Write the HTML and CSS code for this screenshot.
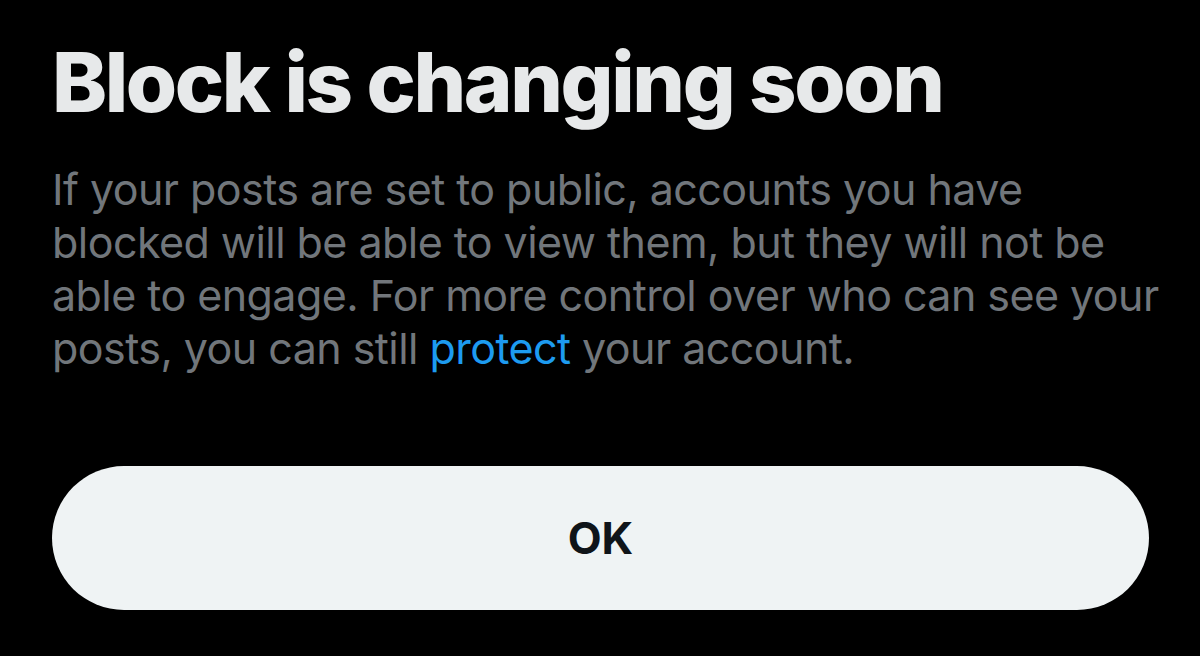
FILE: index.html
```html
<!DOCTYPE html>
<html lang="en">
<head>
<meta charset="utf-8">
<title>Block is changing soon</title>
<link rel="stylesheet" href="styles.css">
</head>
<body>
<main class="sheet">
  <h1 class="title">Block is changing soon</h1>
  <p class="desc">If your posts are set to public, accounts you have<br>
  blocked will be able to view them, but they will not be<br>
  able to engage. For more control over who can see your<br>
  posts, you can still <a class="link" href="#">protect</a> your account.</p>
  <button class="ok" type="button">OK</button>
</main>
</body>
</html>
```
FILE: styles.css
```css
html, body {
  margin: 0;
  padding: 0;
  background: #000;
}
body {
  width: 1200px;
  height: 656px;
  overflow: hidden;
  font-family: Inter, "Noto Sans", sans-serif;
}
.sheet {
  display: flex;
  flex-direction: column;
  padding: 32px 51px 0 52px;
}
.title {
  margin: 0;
  font-size: 83px;
  line-height: 100px;
  font-weight: 800;
  color: #e7e9ea;
  letter-spacing: -2.4px;
}
.desc {
  margin: 31px 0 0 0;
  font-size: 43px;
  line-height: 53px;
  font-weight: 400;
  color: #71767b;
  letter-spacing: -0.55px;
  white-space: nowrap;
}
.link {
  color: #1d9bf0;
  text-decoration: none;
}
.ok {
  margin-top: 91px;
  height: 144px;
  width: 100%;
  border: none;
  border-radius: 72px;
  background: #eff3f4;
  color: #0f1419;
  font-family: Inter, "Noto Sans", sans-serif;
  font-size: 44px;
  font-weight: 700;
  cursor: pointer;
}
```
